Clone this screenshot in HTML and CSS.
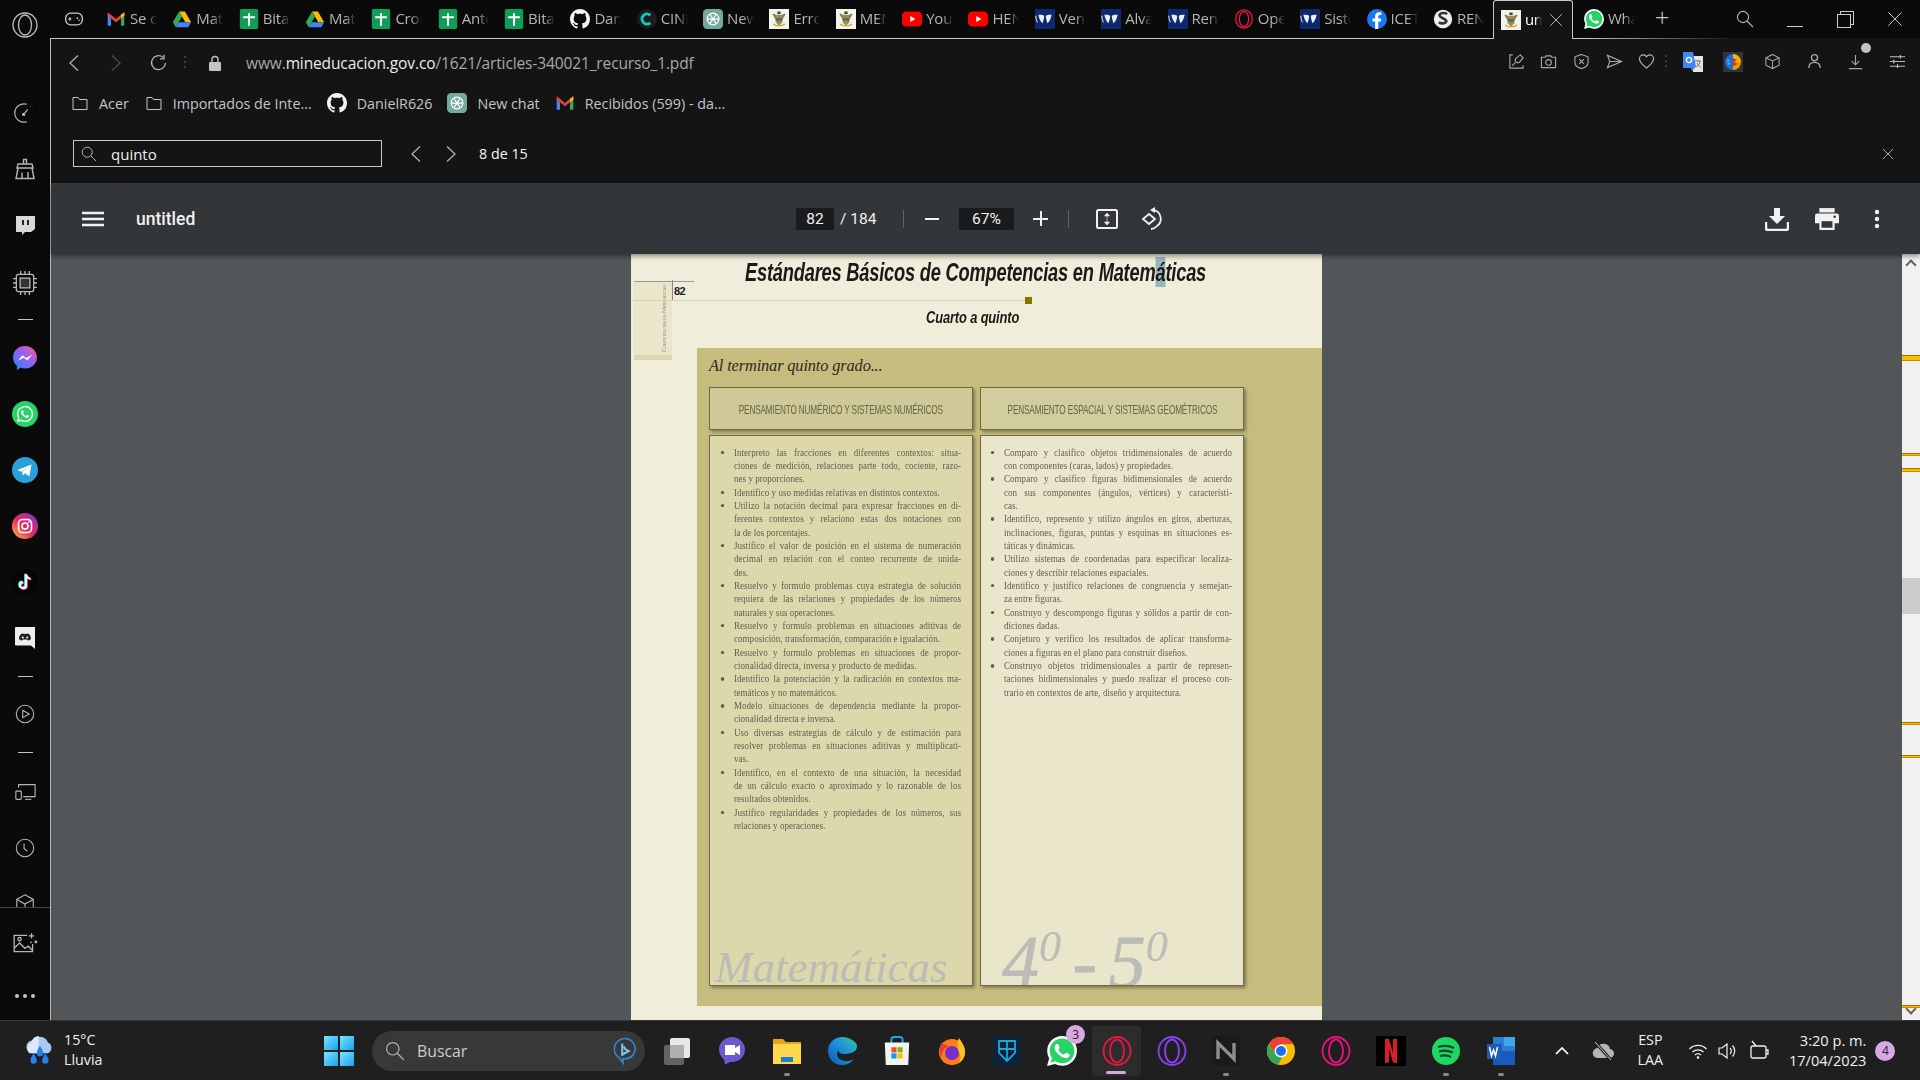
FILE: index.html
```html
<!DOCTYPE html>
<html lang="es">
<head>
<meta charset="utf-8">
<title>untitled</title>
<link rel="stylesheet" href="styles.css">
</head>
<body>
<svg class="sprite" xmlns="http://www.w3.org/2000/svg">
  <defs>
    <linearGradient id="g-ms" x1="0" y1="1" x2="1" y2="0"><stop offset="0" stop-color="#1c8cf5"/><stop offset=".55" stop-color="#9a5cf0"/><stop offset="1" stop-color="#f0609a"/></linearGradient>
    <linearGradient id="g-ig" x1="0" y1="1" x2="1" y2="0"><stop offset="0" stop-color="#fdc43f"/><stop offset=".45" stop-color="#ee2a5c"/><stop offset="1" stop-color="#7a33d0"/></linearGradient>
    <linearGradient id="g-win" x1="0" y1="0" x2="1" y2="1"><stop offset="0" stop-color="#7fe3fb"/><stop offset="1" stop-color="#12a5ee"/></linearGradient>
    <linearGradient id="g-edge" x1="1" y1="0" x2="0" y2="1"><stop offset="0" stop-color="#35c5a0"/><stop offset=".5" stop-color="#1a8ce0"/><stop offset="1" stop-color="#0c59a8"/></linearGradient>
  </defs>
  <symbol id="i-game" viewBox="0 0 24 24"><rect x="2" y="5" width="20" height="14" rx="6" fill="none" stroke="#ccc" stroke-width="1.6"/><path d="M7 10v4M5 12h4" stroke="#ccc" stroke-width="1.4"/><circle cx="16" cy="11" r="1" fill="#ccc"/><circle cx="18" cy="13.5" r="1" fill="#ccc"/></symbol>
  <symbol id="i-gmail" viewBox="0 0 24 24"><path d="M2 6v14h4V11z" fill="#4285f4"/><path d="M22 6v14h-4V11z" fill="#34a853"/><path d="M2 4l4 3 6 5 6-5 4-3v4l-10 8L2 8z" fill="#ea4335"/><path d="M18 7l4-3v4l-4 3z" fill="#fbbc04"/></symbol>
  <symbol id="i-drive" viewBox="0 0 24 24"><path d="M8.5 3h7l7.5 13h-7z" fill="#fbbc04"/><path d="M8.5 3L1 16l3.5 6 7.5-13z" fill="#34a853"/><path d="M8 16h15l-3.5 6h-15z" fill="#4285f4"/></symbol>
  <symbol id="i-sheet" viewBox="0 0 24 24"><rect x="1" y="0" width="22" height="24" rx="2" fill="#0f9d58"/><path d="M12 5v15M5 10h14" stroke="#fff" stroke-width="2.4"/></symbol>
  <symbol id="i-gh" viewBox="0 0 16 16"><path fill="#f4f4f4" d="M8 0C3.58 0 0 3.58 0 8c0 3.54 2.29 6.53 5.47 7.59.4.07.55-.17.55-.38 0-.19-.01-.82-.01-1.49-2.01.37-2.53-.49-2.69-.94-.09-.23-.48-.94-.82-1.13-.28-.15-.68-.52-.01-.53.63-.01 1.08.58 1.23.82.72 1.21 1.87.87 2.33.66.07-.52.28-.87.51-1.07-1.78-.2-3.64-.89-3.64-3.95 0-.87.31-1.59.82-2.15-.08-.2-.36-1.02.08-2.12 0 0 .67-.21 2.2.82.64-.18 1.32-.27 2-.27.68 0 1.36.09 2 .27 1.53-1.04 2.2-.82 2.2-.82.44 1.1.16 1.92.08 2.12.51.56.82 1.27.82 2.15 0 3.07-1.87 3.75-3.65 3.95.29.25.54.73.54 1.48 0 1.07-.01 1.93-.01 2.2 0 .21.15.46.55.38A8.013 8.013 0 0016 8c0-4.42-3.58-8-8-8z"/></symbol>
  <symbol id="i-cin" viewBox="0 0 24 24"><circle cx="12" cy="12" r="12" fill="#1c1c1c"/><path d="M16 7.5a6 6 0 100 9" fill="none" stroke="#14c8b8" stroke-width="3.6"/></symbol>
  <symbol id="i-gpt" viewBox="0 0 24 24"><rect width="24" height="24" rx="5" fill="#74aa9c"/><g fill="none" stroke="#fff" stroke-width="1.5"><circle cx="12" cy="12" r="7"/><path d="M8 6l8 12M16 6L8 18M5 12h14"/></g></symbol>
  <symbol id="i-crest" viewBox="0 0 24 24"><rect width="24" height="24" fill="#f4f4ef"/><path d="M4 6c3-1 4 1 5 3l-1 4zM20 6c-3-1-4 1-5 3l1 4z" fill="#8a7a50"/><path d="M8 7h8v9l-4 4-4-4z" fill="#a58b3a"/><path d="M8 11h8v3H8z" fill="#3a6b9c"/><path d="M10 3h4v3h-4z" fill="#444"/><path d="M5 18c3 3 11 3 14 0" stroke="#c9a63a" fill="none" stroke-width="1.6"/></symbol>
  <symbol id="i-yt" viewBox="0 0 24 24"><rect y="3" width="24" height="18" rx="5" fill="#f00"/><path d="M10 8.5l6 3.5-6 3.5z" fill="#fff"/></symbol>
  <symbol id="i-wp" viewBox="0 0 24 24"><rect width="24" height="24" fill="#10296e"/><path d="M4 7c1 4 2 8 5 10 1-3 2-6 2-9-3-1-5-1-7-1zM20 7c-1 4-2 8-5 10-1-3-2-6-2-9 3-1 5-1 7-1z" fill="#e8f0ff"/><path d="M1 8c0 4 1 6 2 8" stroke="#e8f0ff" fill="none" stroke-width="1.2"/></symbol>
  <symbol id="i-opr" viewBox="0 0 24 24"><g fill="none" stroke="#e0193e" stroke-width="1.6"><ellipse cx="12" cy="12" rx="10" ry="11"/><ellipse cx="12" cy="12" rx="5.6" ry="9"/></g></symbol>
  <symbol id="i-fb" viewBox="0 0 24 24"><circle cx="12" cy="12" r="12" fill="#1877f2"/><path d="M13.5 24v-9h3l.6-3.6h-3.6V9.2c0-1.1.5-1.9 2-1.9h1.7V4.1c-.8-.1-1.8-.2-2.7-.2-2.9 0-4.7 1.7-4.7 4.8v2.7H6.700V15h3.100v9z" fill="#fff"/></symbol>
  <symbol id="i-ren" viewBox="0 0 24 24"><circle cx="12" cy="12" r="11" fill="#eee"/><path d="M17 6c-3-2-8-1.500-9 1-1 4 8 4 8 8-1 2.500-6 3-9 1" fill="none" stroke="#333" stroke-width="3.200"/></symbol>
  <symbol id="i-wa" viewBox="0 0 24 24"><path d="M12 1a11 11 0 00-9.500 16.500L1 23l5.700-1.500A11 11 0 1012 1z" fill="#25d366"/><path fill="#fff" d="M17.472 14.382c-.297-.149-1.758-.867-2.03-.967-.273-.099-.471-.148-.67.15-.197.297-.767.966-.94 1.164-.173.199-.347.223-.644.075-.297-.15-1.255-.463-2.39-1.475-.883-.788-1.48-1.761-1.653-2.059-.173-.297-.018-.458.13-.606.134-.133.298-.347.446-.52.149-.174.198-.298.298-.497.099-.198.05-.371-.025-.52-.075-.149-.669-1.612-.916-2.207-.242-.579-.487-.5-.669-.51-.173-.008-.371-.01-.57-.01-.198 0-.52.074-.792.372-.272.297-1.04 1.016-1.04 2.479 0 1.462 1.065 2.875 1.213 3.074.149.198 2.096 3.2 5.077 4.487.709.306 1.262.489 1.694.625.712.227 1.36.195 1.871.118.571-.085 1.758-.719 2.006-1.413.248-.694.248-1.289.173-1.413-.074-.124-.272-.198-.57-.347m-5.421 7.403h-.004a9.87 9.87 0 01-5.031-1.378l-.361-.214-3.741.982.998-3.648-.235-.374a9.86 9.86 0 01-1.51-5.26c.001-5.45 4.436-9.884 9.888-9.884 2.64 0 5.122 1.03 6.988 2.898a9.825 9.825 0 012.893 6.994c-.003 5.45-4.437 9.884-9.885 9.884m8.413-18.297A11.815 11.815 0 0012.05 0C5.495 0 .16 5.335.157 11.892c0 2.096.547 4.142 1.588 5.945L.057 24l6.305-1.654a11.882 11.882 0 005.683 1.448h.005c6.554 0 11.89-5.335 11.893-11.893a11.821 11.821 0 00-3.48-8.413z"/></symbol>
  <symbol id="i-wa-side" viewBox="0 0 24 24"><circle cx="12" cy="12" r="12" fill="#25d366"/><g transform="translate(4.500 4.500) scale(.625)"><path fill="#fff" d="M17.472 14.382c-.297-.149-1.758-.867-2.03-.967-.273-.099-.471-.148-.67.15-.197.297-.767.966-.94 1.164-.173.199-.347.223-.644.075-.297-.15-1.255-.463-2.39-1.475-.883-.788-1.48-1.761-1.653-2.059-.173-.297-.018-.458.13-.606.134-.133.298-.347.446-.52.149-.174.198-.298.298-.497.099-.198.05-.371-.025-.52-.075-.149-.669-1.612-.916-2.207-.242-.579-.487-.5-.669-.51-.173-.008-.371-.01-.57-.01-.198 0-.52.074-.792.372-.272.297-1.04 1.016-1.04 2.479 0 1.462 1.065 2.875 1.213 3.074.149.198 2.096 3.2 5.077 4.487.709.306 1.262.489 1.694.625.712.227 1.36.195 1.871.118.571-.085 1.758-.719 2.006-1.413.248-.694.248-1.289.173-1.413-.074-.124-.272-.198-.57-.347m-5.421 7.403h-.004a9.87 9.87 0 01-5.031-1.378l-.361-.214-3.741.982.998-3.648-.235-.374a9.86 9.86 0 01-1.51-5.26c.001-5.45 4.436-9.884 9.888-9.884 2.64 0 5.122 1.03 6.988 2.898a9.825 9.825 0 012.893 6.994c-.003 5.45-4.437 9.884-9.885 9.884m8.413-18.297A11.815 11.815 0 0012.05 0C5.495 0 .16 5.335.157 11.892c0 2.096.547 4.142 1.588 5.945L.057 24l6.305-1.654a11.882 11.882 0 005.683 1.448h.005c6.554 0 11.89-5.335 11.893-11.893a11.821 11.821 0 00-3.48-8.413z"/></g></symbol>

  <symbol id="s-opera" viewBox="0 0 26 26"><g fill="none" stroke="#bdbdbd" stroke-width="1.3"><circle cx="13" cy="13" r="12"/><ellipse cx="13" cy="13" rx="6.500" ry="10"/></g></symbol>
  <symbol id="s-speed" viewBox="0 0 24 24"><g fill="none" stroke="#b5b5b5" stroke-width="1.300"><path d="M14 21.500A10 10 0 1 1 14 2.500"/><path d="M18 5l.1.1M20.500 8.500l.1.1M21.800 12l.1.100M21 16l.1.100M18.500 19l.1.100" stroke-width="1.600"/><path d="M11 13l4-5"/></g><circle cx="10.500" cy="13.500" r="1.800" fill="#b5b5b5"/></symbol>
  <symbol id="s-broom" viewBox="0 0 24 24"><g fill="none" stroke="#b5b5b5" stroke-width="1.400"><path d="M10.500 7V2.500h3V7M5 7h14l1 4H4z"/><path d="M5 11l-2 10.500h18L19 11M9 15.500v6M15 15v6"/></g></symbol>
  <symbol id="s-twitch" viewBox="0 0 24 24"><path d="M3 3h19v13l-4 3h-6l-3 3v-3H3z" fill="#d8d8d8"/><path d="M10 7v5M15 7v5" stroke="#222" stroke-width="2"/></symbol>
  <symbol id="s-cpu" viewBox="0 0 24 24"><g fill="none" stroke="#b8b8b8" stroke-width="1.200"><rect x="4" y="4" width="16" height="16" rx="2"/><rect x="7.500" y="7.500" width="9" height="9" fill="#333"/><path d="M1 8h3M1 12h3M1 16h3M20 8h3M20 12h3M20 16h3M8 1v3M12 1v3M16 1v3M8 20v3M12 20v3M16 20v3"/></g></symbol>
  <symbol id="s-msgr" viewBox="0 0 24 24"><path d="M12 1C5.500 1 1 5.500 1 11.500c0 3.200 1.300 5.800 3.500 7.700V23l3.500-1.900c1.300.4 2.600.6 4 .6 6.500 0 11-4.700 11-10.200S18.500 1 12 1z" fill="url(#g-ms)"/><path d="M5.500 14.500l4-5 3.500 2.600 5.500-3-4.200 5.200-3.500-2.600z" fill="#fff"/></symbol>
  <symbol id="s-tg" viewBox="0 0 24 24"><circle cx="12" cy="12" r="12" fill="#2a9fd8"/><path d="M5 12l13-5-2 11-4-3-2 2-.6-3.500L16 9l-7.500 4.500z" fill="#fff"/></symbol>
  <symbol id="s-ig" viewBox="0 0 24 24"><circle cx="12" cy="12" r="12" fill="url(#g-ig)"/><rect x="6" y="6" width="12" height="12" rx="3.500" fill="none" stroke="#fff" stroke-width="1.500"/><circle cx="12" cy="12" r="2.800" fill="none" stroke="#fff" stroke-width="1.500"/><circle cx="15.600" cy="8.400" r=".9" fill="#fff"/></symbol>
  <symbol id="s-tt" viewBox="0 0 24 24"><circle cx="12" cy="12" r="12" fill="#050505"/><path d="M13 5v10a2.800 2.800 0 1 1-2.800-2.800M13 5c.5 2.500 2 3.800 4 4" fill="none" stroke="#25f4ee" stroke-width="2" transform="translate(-.8 -.6)"/><path d="M13 5v10a2.800 2.800 0 1 1-2.800-2.800M13 5c.5 2.500 2 3.800 4 4" fill="none" stroke="#fe2c55" stroke-width="2" transform="translate(.8 .6)"/><path d="M13 5v10a2.800 2.800 0 1 1-2.800-2.800M13 5c.5 2.500 2 3.800 4 4" fill="none" stroke="#fff" stroke-width="1.700"/></symbol>
  <symbol id="s-dc" viewBox="0 0 24 24"><path d="M3 1h19v22l-4-3.500H3a1 1 0 01-1-1V2a1 1 0 011-1z" fill="#eee"/><path d="M6 13c0-3 1.500-5 3-5.500l3 .5 3-.5c1.500.5 3 2.500 3 5.500-1 1-2 1.500-3 1.500l-1-1h-4l-1 1c-1 0-2-.5-3-1.500z" fill="#222"/><circle cx="9.800" cy="11.500" r="1.100" fill="#eee"/><circle cx="14.200" cy="11.500" r="1.100" fill="#eee"/></symbol>
  <symbol id="s-play" viewBox="0 0 24 24"><circle cx="12" cy="12" r="9.500" fill="none" stroke="#b5b5b5" stroke-width="1.200"/><path d="M9.500 8l7 4-7 4z" fill="none" stroke="#b5b5b5" stroke-width="1.200"/></symbol>
  <symbol id="s-screen" viewBox="0 0 24 24"><g fill="none" stroke="#b5b5b5" stroke-width="1.200"><path d="M5 7V4h18v13H10"/><rect x="2" y="11" width="6" height="9" rx="1"/><path d="M12 20h7"/></g></symbol>
  <symbol id="s-clock" viewBox="0 0 24 24"><circle cx="12" cy="12" r="9.500" fill="none" stroke="#b5b5b5" stroke-width="1.200"/><path d="M11 7v5.500l3.500 3" fill="none" stroke="#b5b5b5" stroke-width="1.200"/></symbol>
  <symbol id="s-cube" viewBox="0 0 24 24"><g fill="none" stroke="#b5b5b5" stroke-width="1.200"><path d="M12 2l9 5v10l-9 5-9-5V7z"/><path d="M3 7l9 5 9-5M12 12v10"/></g></symbol>
  <symbol id="s-photos" viewBox="0 0 24 24"><g fill="none" stroke="#b5b5b5" stroke-width="1.200"><path d="M14 4H2v15h17v-7"/><path d="M2 16l5-5 5 5 3-2 4 4"/><circle cx="7" cy="7.500" r="1.500"/><path d="M18 2v5M15.500 4.500h5M21 9l2 2M23 9l-2 2M17 10l1 1"/></g></symbol>

  <symbol id="a-pin" viewBox="0 0 18 18"><g fill="none" stroke="#a8a8a8" stroke-width="1.200"><path d="M5 2H2v14h14v-3M8 6l5-4 3 3-4 5-2 .5-2.500-2.500zM8 10l-3.500 3.500"/></g></symbol>
  <symbol id="a-cam" viewBox="0 0 18 18"><g fill="none" stroke="#a8a8a8" stroke-width="1.200"><path d="M1.500 4.500h4L6.500 3h5l1 1.500h4v11h-15z"/><circle cx="9" cy="10" r="3"/></g></symbol>
  <symbol id="a-shield" viewBox="0 0 18 18"><g fill="none" stroke="#a8a8a8" stroke-width="1.200"><path d="M9 1.500L16 4v6c0 3-3.500 5.500-7 6.500C5.500 15.500 2 13 2 10V4z"/><path d="M6.500 6.500l5 5M11.500 6.500l-5 5"/></g></symbol>
  <symbol id="a-send" viewBox="0 0 18 18"><path d="M1.500 2.500L16.500 9 1.500 15.500 4 9z M4 9h12.500" fill="none" stroke="#a8a8a8" stroke-width="1.200"/></symbol>
  <symbol id="a-heart" viewBox="0 0 18 18"><path d="M9 16C4 12 1.500 9.500 1.500 6.200 1.500 3.800 3.300 2 5.500 2 7 2 8.300 2.800 9 4c.7-1.200 2-2 3.500-2 2.200 0 4 1.800 4 4.200C16.500 9.500 14 12 9 16z" fill="none" stroke="#b5b5b5" stroke-width="1.200"/></symbol>
  <symbol id="a-gt" viewBox="0 0 20 20"><rect x="10" y="4" width="10" height="16" fill="#e6e6e6"/><path d="M0 0h10l3 14.500L9 19l-1-3H0z" fill="#4285f4"/><path d="M12 9h6M15 8v1M13 15c2-1 3.500-3 4-6M14 11c.8 2 2 3.500 4 4.500" stroke="#777" stroke-width="1" fill="none"/><circle cx="6" cy="8" r="2.600" fill="none" stroke="#fff" stroke-width="1.300"/></symbol>
  <symbol id="a-wheel" viewBox="0 0 20 20"><rect width="20" height="20" fill="#333"/><path d="M10 2a8 8 0 000 16z" fill="#1e6fd8"/><path d="M10 2a8 8 0 018 8h-8z" fill="#f4b400"/><path d="M10 10h8a8 8 0 01-8 8z" fill="#e8a000"/><path d="M10 6l4 2-3 2 4 2-5 2z" fill="#d9301c"/><path d="M4 7l3 1-2 2 3 2-3 1z" fill="#53a6f4"/></symbol>
  <symbol id="a-cube" viewBox="0 0 18 18"><g fill="none" stroke="#a8a8a8" stroke-width="1.100"><path d="M9 1.500l7 3.500v8l-7 3.500L2 13V5z"/><path d="M2 5l7 3.500L16 5M9 8.500v8"/></g></symbol>
  <symbol id="a-user" viewBox="0 0 18 18"><g fill="none" stroke="#a8a8a8" stroke-width="1.400"><circle cx="9" cy="5" r="3.200"/><path d="M3 16c0-4 2.500-6 6-6s6 2 6 6"/></g></symbol>
  <symbol id="a-dl" viewBox="0 0 18 18"><g fill="none" stroke="#a8a8a8" stroke-width="1.200"><path d="M9 2v10M5 8.500L9 12.500l4-4M2 16.500h14"/></g></symbol>
  <symbol id="a-sliders" viewBox="0 0 18 18"><g fill="none" stroke="#bdbdbd" stroke-width="1.200"><path d="M1 4h16M1 9h16M1 14h16M12 2v4M5 7v4M9 12v4"/></g></symbol>
  <symbol id="n-back" viewBox="0 0 12 18"><path d="M10 1.500L2 9l8 7.500" fill="none" stroke="#b0b0b0" stroke-width="1.300"/></symbol>
  <symbol id="n-fwd" viewBox="0 0 12 18"><path d="M2 1.500L10 9l-8 7.500" fill="none" stroke="#b0b0b0" stroke-width="1.300"/></symbol>
  <symbol id="n-reload" viewBox="0 0 18 18"><path d="M15.500 9A7 7 0 1 1 13 3.300M14 .8v4h-4" fill="none" stroke="#b5b5b5" stroke-width="1.300"/></symbol>
  <symbol id="n-lock" viewBox="0 0 12 16"><path d="M3 7V4.500a3 3 0 016 0V7" fill="none" stroke="#c4c4c4" stroke-width="1.400"/><rect y="7" width="12" height="9" rx="1" fill="#c4c4c4"/></symbol>
  <symbol id="n-folder" viewBox="0 0 16 16"><path d="M1 2.500h5l1.500 2H15v10H1z" fill="none" stroke="#c4c4c4" stroke-width="1"/></symbol>
  <symbol id="n-search" viewBox="0 0 18 18"><circle cx="7" cy="7" r="5.600" fill="none" stroke="#b5b5b5" stroke-width="1.100"/><path d="M11 11l6 6" stroke="#b5b5b5" stroke-width="1.100"/></symbol>
  <symbol id="n-x" viewBox="0 0 18 18"><path d="M1.500 1.500l15 15M16.500 1.500l-15 15" stroke="#d0d0d0" stroke-width="1.100"/></symbol>

  <symbol id="p-menu" viewBox="0 0 22 16"><path d="M0 2h22M0 8h22M0 14h22" stroke="#f1f1f1" stroke-width="2.400"/></symbol>
  <symbol id="p-fit" viewBox="0 0 22 20"><rect x="1" y="1" width="20" height="18" rx="1.500" fill="none" stroke="#f1f1f1" stroke-width="2"/><path d="M11 4l-2.500 3h5zM11 16l-2.500-3h5zM11 7v6" fill="#f1f1f1" stroke="#f1f1f1" stroke-width=".6"/></symbol>
  <symbol id="p-rot" viewBox="0 0 22 24"><path d="M13 3a9 9 0 013 16 9 9 0 01-6 3" fill="none" stroke="#f1f1f1" stroke-width="1.800"/><path d="M9 3l5-3v6z" fill="#f1f1f1"/><path d="M8 7l6 5-6 5-6-5z" fill="none" stroke="#f1f1f1" stroke-width="1.800"/></symbol>
  <symbol id="p-dl" viewBox="0 0 24 24"><path d="M9 1h6v8h5l-8 8-8-8h5z" fill="#f1f1f1"/><path d="M1 15v6a2 2 0 002 2h18a2 2 0 002-2v-6" fill="none" stroke="#f1f1f1" stroke-width="2.500"/></symbol>
  <symbol id="p-print" viewBox="0 0 22 20"><path d="M4 0h14v4H4z" fill="#f1f1f1"/><path d="M2 5h18a2 2 0 012 2v7h-4v6H4v-6H0V7a2 2 0 012-2z" fill="#f1f1f1"/><rect x="6" y="12" width="10" height="6" fill="#323639"/><circle cx="18" cy="8" r="1.100" fill="#323639"/></symbol>
  <symbol id="p-dots" viewBox="0 0 6 20"><circle cx="3" cy="3" r="2.200" fill="#f1f1f1"/><circle cx="3" cy="10" r="2.200" fill="#f1f1f1"/><circle cx="3" cy="17" r="2.200" fill="#f1f1f1"/></symbol>

  <symbol id="t-weather" viewBox="0 0 30 30"><path d="M8 17a6 6 0 01.500-12 8 8 0 0114 2 5.500 5.500 0 010 10z" fill="#a9c9f5"/><path d="M14 1a7 7 0 00-7 6 6 6 0 00-2 10h8z" fill="#dbe8ff"/><path d="M9 17c-2 3-3 5-3 7a3 3 0 006 0c0-2-1-4-3-7zM20 17c-2 3-3 5-3 7a3 3 0 006 0c0-2-1-4-3-7zM15 10c-2 3-3 5-3 7a3 3 0 006 0c0-2-1-4-3-7z" fill="#2481ea"/></symbol>
  <symbol id="t-win" viewBox="0 0 30 30"><g fill="url(#g-win)"><rect width="14" height="14"/><rect x="16" width="14" height="14"/><rect y="16" width="14" height="14"/><rect x="16" y="16" width="14" height="14"/></g></symbol>
  <symbol id="t-bing" viewBox="0 0 26 30"><path d="M13 1.500a11.500 11.500 0 00-6 21.300L11 28l-.5-4.500h2.500a11 11 0 000-22z" fill="none" stroke="#2e8bd8" stroke-width="1.600"/><path d="M10 7v12l7-4-4-2-1-3" fill="none" stroke="#7cc6f5" stroke-width="2.200"/></symbol>
  <symbol id="t-view" viewBox="0 0 30 30"><rect x="8" y="2" width="20" height="20" rx="2" fill="#e8e8e8"/><rect x="2" y="9" width="20" height="20" rx="2" fill="#6a6a6a" opacity=".9"/><rect x="8" y="9" width="14" height="13" fill="#b0b0b0"/></symbol>
  <symbol id="t-meet" viewBox="0 0 30 30"><path d="M15 1C8 1 2 6.500 2 13.500c0 4 2 7.500 5 10l1 5 5-2.500h2c7 0 13-5.500 13-12.500S22 1 15 1z" fill="#6a5acd"/><path d="M8 9h10v10H8zM18 12l5-3v10l-5-3z" fill="#fff"/></symbol>
  <symbol id="t-files" viewBox="0 0 30 30"><path d="M1 3h10l3 3h15v22H1z" fill="#e8a317"/><path d="M1 8h28v20H1z" fill="#ffd84d"/><rect x="9" y="21" width="12" height="5" fill="#1d7fd1"/></symbol>
  <symbol id="t-edge" viewBox="0 0 30 30"><path d="M15 1A14 14 0 001 15c0 8 6 14 14 14 5 0 9-2 12-6-3 2-6 2-8 2-5 0-9-3-9-7 0-2 1-3 2-4-1 1 0 4 5 4 7 0 13-2 13-8C30 7 24 1 15 1z" fill="url(#g-edge)"/></symbol>
  <symbol id="t-store" viewBox="0 0 30 32"><path d="M9 8V4a3 3 0 013-3h6a3 3 0 013 3v4" fill="none" stroke="#1aa8e8" stroke-width="2"/><path d="M2 7h26l-1 24H3z" fill="#f2f2f2"/><rect x="9" y="12" width="5.500" height="5.500" fill="#f25022"/><rect x="15.500" y="12" width="5.500" height="5.500" fill="#7fba00"/><rect x="9" y="18.500" width="5.500" height="5.500" fill="#00a4ef"/><rect x="15.500" y="18.500" width="5.500" height="5.500" fill="#ffb900"/></symbol>
  <symbol id="t-fox" viewBox="0 0 30 30"><circle cx="15" cy="16" r="13" fill="#ff7a18"/><path d="M22 2c2 3 6 8 6 14a13 13 0 01-6 11c2-4 2-9-1-12-1-4-1-9 1-13z" fill="#ffc21a"/><circle cx="15" cy="17" r="7" fill="#7a2ec8"/><path d="M5 6c-3 5-3 11 0 16-1-6 2-10 7-12-3-1-6-1-7-4z" fill="#e63c3c"/></symbol>
  <symbol id="t-shield" viewBox="0 0 30 30"><rect x="1" width="28" height="30" fill="#10213a"/><path d="M7 5h16v12l-8 8-8-8zM15 5v20M7 13h16" fill="none" stroke="#19a8d8" stroke-width="1.800"/></symbol>
  <symbol id="t-opera" viewBox="0 0 30 30"><g fill="none" stroke-width="1.900"><ellipse cx="15" cy="15" rx="13.500" ry="14"/><ellipse cx="15" cy="15" rx="7" ry="11.500"/></g></symbol>
  <symbol id="t-n" viewBox="0 0 30 30"><rect x="1" width="28" height="30" rx="3" fill="#1a1a1a"/><path d="M7 23V7l16 16V7" fill="none" stroke="#8e8e8e" stroke-width="3.400"/></symbol>
  <symbol id="t-chrome" viewBox="0 0 30 30"><circle cx="15" cy="15" r="14" fill="#fbbc04"/><path d="M15 1a14 14 0 00-12.100 7L9 18.500 15 8h12.100A14 14 0 0015 1z" fill="#ea4335"/><path d="M2.900 8A14 14 0 0012 28.700L18 18.500l-9 0z" fill="#34a853"/><circle cx="15" cy="15" r="6.500" fill="#fff"/><circle cx="15" cy="15" r="5" fill="#1a73e8"/></symbol>
  <symbol id="t-flix" viewBox="0 0 30 30"><rect width="30" height="30" fill="#000"/><path d="M9 3h4l4 14V3h4v24l-4-.5-4-14V26.500L9 27z" fill="#d81f26"/></symbol>
  <symbol id="t-spot" viewBox="0 0 30 30"><circle cx="15" cy="15" r="14" fill="#1ed760"/><path d="M7 11c6-2 11-1.500 16 1M8 15.500c5-1.500 9-1 14 1M9 20c4-1 8-.6 11 1" fill="none" stroke="#143" stroke-width="2.200"/></symbol>
  <symbol id="t-word" viewBox="0 0 30 30"><rect x="7" y="1" width="22" height="28" fill="#2b7cd3"/><rect x="7" y="15" width="22" height="14" fill="#185abd"/><rect x="18" y="1" width="11" height="9" fill="#41a5ee"/><rect x="1" y="8" width="15" height="15" fill="#1e5cb3"/><path d="M3.500 11l2 9 2-6 2 6 2-9" fill="none" stroke="#fff" stroke-width="1.500"/></symbol>
  <symbol id="t-caret" viewBox="0 0 16 10"><path d="M2 8l6-6 6 6" fill="none" stroke="#fff" stroke-width="1.700"/></symbol>
  <symbol id="t-cloud" viewBox="0 0 22 22"><path d="M6 18a5 5 0 01-.500-10 6.500 6.500 0 0112.500 1 4.500 4.500 0 01-1 9z" fill="#b5b5b5"/><path d="M3 2l16 18" stroke="#1f1f1f" stroke-width="3"/><path d="M3 2l16 18" stroke="#ccc" stroke-width="1"/></symbol>
  <symbol id="t-wifi" viewBox="0 0 20 20"><g fill="none" stroke="#f0f0f0" stroke-width="1.300"><path d="M1.500 8a12 12 0 0117 0M4.500 11a8 8 0 0111 0M7 14a4.500 4.500 0 016 0"/></g><circle cx="10" cy="16.500" r="1.300" fill="#f0f0f0"/></symbol>
  <symbol id="t-vol" viewBox="0 0 20 20"><g fill="none" stroke="#f0f0f0" stroke-width="1.200"><path d="M2 7v6h3l5 4V3L5 7z"/><path d="M13 7a4 4 0 010 6M15.500 4.500a8 8 0 010 11" /></g></symbol>
  <symbol id="t-bat" viewBox="0 0 22 22"><g fill="none" stroke="#f0f0f0" stroke-width="1.300"><rect x="3" y="6" width="15" height="12" rx="2"/><path d="M18 10h2v4h-2M4 1l4 5"/></g></symbol>
</svg>

<div class="app">
  <aside class="sidebar">
    <div class="side-top">
      <div class="side-logo"><svg class="ic26"><use href="#s-opera"/></svg></div>
      <div class="side-item first"><svg class="ic22"><use href="#s-speed"/></svg></div>
      <div class="side-item"><svg class="ic24"><use href="#s-broom"/></svg></div>
      <div class="side-item"><svg class="ic24"><use href="#s-twitch"/></svg></div>
      <div class="side-item nudge"><svg class="ic26"><use href="#s-cpu"/></svg></div>
      <div class="side-sep s1"></div>
      <div class="side-item"><svg class="ic26"><use href="#s-msgr"/></svg></div>
      <div class="side-item"><svg class="ic26"><use href="#i-wa-side"/></svg></div>
      <div class="side-item"><svg class="ic26"><use href="#s-tg"/></svg></div>
      <div class="side-item"><svg class="ic26"><use href="#s-ig"/></svg></div>
      <div class="side-item"><svg class="ic26"><use href="#s-tt"/></svg></div>
      <div class="side-item"><svg class="ic24"><use href="#s-dc"/></svg></div>
      <div class="side-sep"></div>
      <div class="side-item"><svg class="ic22"><use href="#s-play"/></svg></div>
      <div class="side-sep s3"></div>
      <div class="side-item"><svg class="ic22"><use href="#s-screen"/></svg></div>
      <div class="side-item"><svg class="ic22"><use href="#s-clock"/></svg></div>
      <div class="side-item"><svg class="ic22"><use href="#s-cube"/></svg></div>
    </div>
    <div class="side-bottom">
      <div class="side-slot"><svg class="ic26"><use href="#s-photos"/></svg></div>
      <div class="side-more"><i></i><i></i><i></i></div>
    </div>
  </aside>

  <div class="content">
    <div class="tabstrip">
      <div class="tab-game"><svg class="ic20"><use href="#i-game"/></svg></div>
      <div class="tab"><svg class="ic20"><use href="#i-gmail"/></svg><span class="tab-t">Se con</span></div>
      <div class="tab"><svg class="ic20"><use href="#i-drive"/></svg><span class="tab-t">Mate</span></div>
      <div class="tab"><svg class="ic20"><use href="#i-sheet"/></svg><span class="tab-t">Bitac</span></div>
      <div class="tab"><svg class="ic20"><use href="#i-drive"/></svg><span class="tab-t">Mate</span></div>
      <div class="tab"><svg class="ic20"><use href="#i-sheet"/></svg><span class="tab-t">Cron</span></div>
      <div class="tab"><svg class="ic20"><use href="#i-sheet"/></svg><span class="tab-t">Ante</span></div>
      <div class="tab"><svg class="ic20"><use href="#i-sheet"/></svg><span class="tab-t">Bitac</span></div>
      <div class="tab"><svg class="ic20"><use href="#i-gh"/></svg><span class="tab-t">Dani</span></div>
      <div class="tab"><svg class="ic20"><use href="#i-cin"/></svg><span class="tab-t">CINE</span></div>
      <div class="tab"><svg class="ic20"><use href="#i-gpt"/></svg><span class="tab-t">New</span></div>
      <div class="tab"><svg class="ic20"><use href="#i-crest"/></svg><span class="tab-t">Error</span></div>
      <div class="tab"><svg class="ic20"><use href="#i-crest"/></svg><span class="tab-t">MEN</span></div>
      <div class="tab"><svg class="ic20"><use href="#i-yt"/></svg><span class="tab-t">YouT</span></div>
      <div class="tab"><svg class="ic20"><use href="#i-yt"/></svg><span class="tab-t">HEN</span></div>
      <div class="tab"><svg class="ic20"><use href="#i-wp"/></svg><span class="tab-t">Vent</span></div>
      <div class="tab"><svg class="ic20"><use href="#i-wp"/></svg><span class="tab-t">Alva</span></div>
      <div class="tab"><svg class="ic20"><use href="#i-wp"/></svg><span class="tab-t">Ren</span></div>
      <div class="tab"><svg class="ic20"><use href="#i-opr"/></svg><span class="tab-t">Ope</span></div>
      <div class="tab"><svg class="ic20"><use href="#i-wp"/></svg><span class="tab-t">Siste</span></div>
      <div class="tab"><svg class="ic20"><use href="#i-fb"/></svg><span class="tab-t">ICET</span></div>
      <div class="tab"><svg class="ic20"><use href="#i-ren"/></svg><span class="tab-t">REN</span></div>
      <div class="tab active"><svg class="ic20"><use href="#i-crest"/></svg><span class="tab-t">un</span><svg class="ic14 tab-x"><use href="#n-x"/></svg></div>
      <div class="tab after"><svg class="ic20"><use href="#i-wa"/></svg><span class="tab-t">Wha</span></div>
      <div class="tab-plus">+</div>
      <div class="winctl">
        <div class="win"><svg class="ic18"><use href="#n-search"/></svg></div>
        <div class="win"><span class="min"></span></div>
        <div class="win"><span class="rest"></span></div>
        <div class="win"><svg class="ic16"><use href="#n-x"/></svg></div>
      </div>
    </div>

    <div class="window">
      <div class="chrome">
        <div class="addr">
          <svg class="nav back"><use href="#n-back"/></svg>
          <svg class="nav fwd"><use href="#n-fwd"/></svg>
          <svg class="ic18 reload"><use href="#n-reload"/></svg>
          <span class="vdots"></span>
          <svg class="lock"><use href="#n-lock"/></svg>
          <div class="url">www.<b>mineducacion.gov.co</b>/1621/articles-340021_recurso_1.pdf</div>
          <div class="addr-tools">
            <div class="s32"><svg class="ic17"><use href="#a-pin"/></svg></div>
            <div class="s32"><svg class="ic17"><use href="#a-cam"/></svg></div>
            <div class="s34"><svg class="ic17"><use href="#a-shield"/></svg></div>
            <div class="s32"><svg class="ic17"><use href="#a-send"/></svg></div>
            <div class="s32"><svg class="ic17"><use href="#a-heart"/></svg></div>
            <div class="s8"><span class="vdots"></span></div>
            <div class="s46"><svg class="ic20"><use href="#a-gt"/></svg></div>
            <div class="s34"><svg class="ic20"><use href="#a-wheel"/></svg></div>
            <div class="s44"><svg class="ic17"><use href="#a-cube"/></svg></div>
            <div class="s40"><svg class="ic17"><use href="#a-user"/></svg></div>
            <div class="s42 has-dot"><svg class="ic17"><use href="#a-dl"/></svg><span class="dot"></span></div>
            <div class="s42"><svg class="ic17"><use href="#a-sliders"/></svg></div>
          </div>
        </div>

        <div class="marks">
          <div class="mark-i m-acer"><svg class="ic16"><use href="#n-folder"/></svg><span>Acer</span></div>
          <div class="mark-i m-imp"><svg class="ic16"><use href="#n-folder"/></svg><span>Importados de Inte...</span></div>
          <div class="mark-i m-app"><svg class="ic20"><use href="#i-gh"/></svg><span>DanielR626</span></div>
          <div class="mark-i m-app"><svg class="ic20"><use href="#i-gpt"/></svg><span>New chat</span></div>
          <div class="mark-i m-app"><svg class="ic20"><use href="#i-gmail"/></svg><span>Recibidos (599) - da...</span></div>
        </div>

        <div class="find">
          <div class="find-box"><svg class="ic16"><use href="#n-search"/></svg><span>quinto</span></div>
          <svg class="nav find-prev"><use href="#n-back"/></svg>
          <svg class="nav find-next"><use href="#n-fwd"/></svg>
          <span class="find-count">8 de 15</span>
          <svg class="ic12 find-x"><use href="#n-x"/></svg>
        </div>
      </div>

      <div class="pdfbar">
        <div class="pdf-left">
          <svg class="p-menu"><use href="#p-menu"/></svg>
          <span class="pdf-title">untitled</span>
        </div>
        <div class="pdf-center">
          <span class="pdf-input pg">82</span>
          <span class="pdf-total">/ 184</span>
          <span class="pdf-sep first"></span>
          <span class="pdf-minus"></span>
          <span class="pdf-input zm">67%</span>
          <span class="pdf-plus"></span>
          <span class="pdf-sep"></span>
          <svg class="p-fit"><use href="#p-fit"/></svg>
          <svg class="p-rot"><use href="#p-rot"/></svg>
        </div>
        <div class="pdf-right">
          <svg class="ic24"><use href="#p-dl"/></svg>
          <svg class="ic24 pr"><use href="#p-print"/></svg>
          <svg class="p-dots"><use href="#p-dots"/></svg>
        </div>
      </div>

      <div class="viewer">
        <div class="pdf-area">
          <div class="page">
            <div class="margin-tab"><span class="margin-txt">Competencias en Matemáticas</span></div>
            <div class="page-no">82</div>
            <div class="page-head">
              <h1 class="h-title"><span class="cond">Estándares Básicos de Competencias en Matem<span class="hit">á</span>ticas</span></h1>
              <div class="h-rule"><i></i></div>
              <h2 class="h-sub"><span class="cond">Cuarto a quinto</span></h2>
            </div>
            <div class="olive">
              <p class="intro">Al terminar quinto grado...</p>
              <div class="cols">
                <div class="col-h"><span class="cond-c">PENSAMIENTO NUMÉRICO Y SISTEMAS NUMÉRICOS</span></div>
                <div class="col-h alt"><span class="cond-c">PENSAMIENTO ESPACIAL Y SISTEMAS GEOMÉTRICOS</span></div>
                <div class="col-b">
                  <ul class="list">
                    <li><span>Interpreto las fracciones en diferentes contextos: situa-</span><span>ciones de medición, relaciones parte todo, cociente, razo-</span><span class="e">nes y proporciones.</span></li>
                    <li><span class="e">Identifico y uso medidas relativas en distintos contextos.</span></li>
                    <li><span>Utilizo la notación decimal para expresar fracciones en di-</span><span>ferentes contextos y relaciono estas dos notaciones con</span><span class="e">la de los porcentajes.</span></li>
                    <li><span>Justifico el valor de posición en el sistema de numeración</span><span>decimal en relación con el conteo recurrente de unida-</span><span class="e">des.</span></li>
                    <li><span>Resuelvo y formulo problemas cuya estrategia de solución</span><span>requiera de las relaciones y propiedades de los números</span><span class="e">naturales y sus operaciones.</span></li>
                    <li><span>Resuelvo y formulo problemas en situaciones aditivas de</span><span class="e">composición, transformación, comparación e igualación.</span></li>
                    <li><span>Resuelvo y formulo problemas en situaciones de propor-</span><span class="e">cionalidad directa, inversa y producto de medidas.</span></li>
                    <li><span>Identifico la potenciación y la radicación en contextos ma-</span><span class="e">temáticos y no matemáticos.</span></li>
                    <li><span>Modelo situaciones de dependencia mediante la propor-</span><span class="e">cionalidad directa e inversa.</span></li>
                    <li><span>Uso diversas estrategias de cálculo y de estimación para</span><span>resolver problemas en situaciones aditivas y multiplicati-</span><span class="e">vas.</span></li>
                    <li><span>Identifico, en el contexto de una situación, la necesidad</span><span>de un cálculo exacto o aproximado y lo razonable de los</span><span class="e">resultados obtenidos.</span></li>
                    <li><span>Justifico regularidades y propiedades de los números, sus</span><span class="e">relaciones y operaciones.</span></li>
                  </ul>
                  <div class="wm wm-l">Matemáticas</div>
                </div>
                <div class="col-b alt">
                  <ul class="list">
                    <li><span>Comparo y clasifico objetos tridimensionales de acuerdo</span><span class="e">con componentes (caras, lados) y propiedades.</span></li>
                    <li><span>Comparo y clasifico figuras bidimensionales de acuerdo</span><span>con sus componentes (ángulos, vértices) y característi-</span><span class="e">cas.</span></li>
                    <li><span>Identifico, represento y utilizo ángulos en giros, aberturas,</span><span>inclinaciones, figuras, puntas y esquinas en situaciones es-</span><span class="e">táticas y dinámicas.</span></li>
                    <li><span>Utilizo sistemas de coordenadas para especificar localiza-</span><span class="e">ciones y describir relaciones espaciales.</span></li>
                    <li><span>Identifico y justifico relaciones de congruencia y semejan-</span><span class="e">za entre figuras.</span></li>
                    <li><span>Construyo y descompongo figuras y sólidos a partir de con-</span><span class="e">diciones dadas.</span></li>
                    <li><span>Conjeturo y verifico los resultados de aplicar transforma-</span><span class="e">ciones a figuras en el plano para construir diseños.</span></li>
                    <li><span>Construyo objetos tridimensionales a partir de represen-</span><span>taciones bidimensionales y puedo realizar el proceso con-</span><span class="e">trario en contextos de arte, diseño y arquitectura.</span></li>
                  </ul>
                  <div class="wm wm-r">4<sup>0</sup> - 5<sup>0</sup></div>
                </div>
              </div>
            </div>
          </div>
        </div>
        <div class="scroll">
          <div class="sc-arrow up"></div>
          <i class="hit-mark m1"></i><i class="hit-mark m2"></i><i class="hit-mark m3"></i><i class="hit-mark m4"></i><i class="hit-mark m5"></i><i class="hit-mark m6"></i>
          <i class="thumb"></i>
          <div class="sc-arrow down"></div>
        </div>
      </div>
    </div>
  </div>

  <footer class="taskbar">
    <div class="weather">
      <svg class="wx"><use href="#t-weather"/></svg>
      <div class="wx-t"><span>15°C</span><span>Lluvia</span></div>
    </div>
    <div class="tb-win"><svg class="ic30"><use href="#t-win"/></svg></div>
    <div class="tb-search">
      <svg class="ic20"><use href="#n-search"/></svg>
      <span>Buscar</span>
      <svg class="bing"><use href="#t-bing"/></svg>
    </div>
    <div class="tb-apps">
      <div class="app-i"><svg class="ic30"><use href="#t-view"/></svg></div>
      <div class="app-i"><svg class="ic30"><use href="#t-meet"/></svg></div>
      <div class="app-i run"><svg class="ic30"><use href="#t-files"/></svg></div>
      <div class="app-i"><svg class="ic30"><use href="#t-edge"/></svg></div>
      <div class="app-i"><svg class="ic30"><use href="#t-store"/></svg></div>
      <div class="app-i"><svg class="ic30"><use href="#t-fox"/></svg></div>
      <div class="app-i"><svg class="ic30"><use href="#t-shield"/></svg></div>
      <div class="app-i"><svg class="ic30"><use href="#i-wa"/></svg><span class="badge b3">3</span></div>
      <div class="app-i sel"><svg class="ic30 c-red"><use href="#t-opera"/></svg></div>
      <div class="app-i"><svg class="ic30 c-pur"><use href="#t-opera"/></svg></div>
      <div class="app-i run"><svg class="ic30"><use href="#t-n"/></svg></div>
      <div class="app-i"><svg class="ic30"><use href="#t-chrome"/></svg></div>
      <div class="app-i"><svg class="ic30 c-pink"><use href="#t-opera"/></svg></div>
      <div class="app-i"><svg class="ic30"><use href="#t-flix"/></svg></div>
      <div class="app-i run"><svg class="ic30"><use href="#t-spot"/></svg></div>
      <div class="app-i run"><svg class="ic30"><use href="#t-word"/></svg></div>
    </div>
    <div class="tray">
      <svg class="caret"><use href="#t-caret"/></svg>
      <svg class="ic22 cloud"><use href="#t-cloud"/></svg>
      <div class="lang"><span>ESP</span><span>LAA</span></div>
      <svg class="ic20 wifi"><use href="#t-wifi"/></svg>
      <svg class="ic20 vol"><use href="#t-vol"/></svg>
      <svg class="ic22 bat"><use href="#t-bat"/></svg>
      <div class="clock"><span>3:20 p. m.</span><span>17/04/2023</span></div>
      <span class="badge b4">4</span>
    </div>
  </footer>
</div>
</body>
</html>
```

FILE: styles.css
```css
* { box-sizing: border-box; }
html, body { margin: 0; padding: 0; height: 100%; overflow: hidden; background: #0a0a0a; }
body { font-family: "Open Sans", "Noto Sans", sans-serif; color: #ddd; }
.sprite { display: block; width: 0; height: 0; overflow: hidden; }
svg { display: block; flex: none; }
.ic12 { width: 12px; height: 12px; }
.ic14 { width: 14px; height: 14px; }
.ic16 { width: 16px; height: 16px; }
.ic17 { width: 17px; height: 17px; }
.ic18 { width: 18px; height: 18px; }
.ic20 { width: 20px; height: 20px; }
.ic22 { width: 22px; height: 22px; }
.ic24 { width: 24px; height: 24px; }
.ic26 { width: 26px; height: 26px; }
.ic30 { width: 30px; height: 30px; }

.app { display: grid; grid-template-columns: 50px 1fr; grid-template-rows: 1020px 60px; width: 1920px; height: 1080px; }

/* sidebar */
.sidebar { display: flex; flex-direction: column; background: #0a0a0a; }
.side-top { height: 907px; overflow: hidden; }
.side-logo { height: 50px; display: flex; align-items: center; justify-content: center; }
.side-item { height: 56px; display: flex; align-items: center; justify-content: center; }
.side-item.first { margin-top: 34px; height: 57px; }
.side-item.nudge { height: 60px; }
.side-sep { width: 15px; height: 1px; background: #c4c4c4; margin: 10px auto 9px; }
.side-sep.s1 { margin: 6px auto 10px; }
.side-sep.s3 { margin-bottom: 11px; }
.side-bottom { flex: 1; border-top: 1px solid #444; }
.side-slot { height: 72px; display: flex; align-items: center; justify-content: center; }
.side-more { display: flex; justify-content: center; gap: 4px; margin-top: 14px; }
.side-more i { width: 4px; height: 4px; border-radius: 50%; background: #c4c4c4; }

/* tab strip */
.content { display: flex; flex-direction: column; min-width: 0; }
.tabstrip { height: 38px; display: flex; align-items: flex-start; padding-left: 14px; background: #0a0a0a; }
.tab-game { width: 42px; height: 38px; display: flex; align-items: center; }
.tab { width: 66.35px; height: 38px; display: flex; align-items: center; gap: 4px; flex: none; }
.tab-t { width: 27px; margin-top: -2px; overflow: hidden; white-space: nowrap; font-size: 15px; color: #b4b4b4; letter-spacing: -.2px;
  -webkit-mask-image: linear-gradient(90deg, #000 60%, transparent); mask-image: linear-gradient(90deg, #000 60%, transparent); }
.tab.active { position: relative; z-index: 2; width: 80px; height: 39px; margin-left: -6.35px; padding-left: 7px; background: #141414;
  border: 1px solid #c8c8c8; border-bottom: 0; border-radius: 3px 3px 0 0; }
.tab.active .tab-t { width: 17px; color: #fff; }
.tab-x { margin-left: 3px; }
.tab.after { margin-left: 11px; }
.tab-plus { width: 24px; height: 38px; font-size: 26px; font-weight: 300; line-height: 34px; color: #ccc; text-align: center; }
.winctl { margin-left: auto; display: flex; }
.win { width: 50px; height: 38px; display: flex; align-items: center; justify-content: center; }
.min { width: 16px; height: 1px; background: #ccc; margin-top: 15px; }
.rest { width: 14px; height: 14px; border: 1px solid #ccc; margin: 3px 3px 0 0; box-shadow: 3px -3px 0 -1px #0a0a0a, 3px -3px 0 0 #ccc; }

/* browser chrome */
.window { flex: 1; min-height: 0; display: flex; flex-direction: column; border-left: 1px solid #bdbdbd; background: #141414; }
.chrome { height: 145px; background: #141414; flex: none; border-top: 1px solid; border-image: linear-gradient(90deg, #c8c8c8 82%, #141414 90%) 1; }
.addr { height: 45px; display: flex; align-items: center; padding: 2px 0 0 17px; }
.nav { width: 12px; height: 18px; }
.fwd { margin-left: 30px; opacity: .35; }
.reload { margin-left: 28px; }
.vdots { display: block; width: 2px; height: 14px; background: repeating-linear-gradient(180deg, #3c3c3c 0 2px, transparent 2px 5px); }
.addr > .vdots { margin-left: 16px; }
.lock { width: 12px; height: 16px; margin-left: 23px; }
.url { margin-left: 25px; font-size: 15.5px; color: #a8a8a8; white-space: nowrap; letter-spacing: -.12px; }
.url b { font-weight: 400; color: #ececec; }
.addr-tools { margin-left: auto; display: flex; padding-right: 2px; height: 45px; margin-top: -2px; }
.addr-tools > div { display: flex; align-items: center; justify-content: center; flex: none; }
.s8 { width: 8px; } .s32 { width: 32px; } .s34 { width: 34px; } .s40 { width: 40px; } .s42 { width: 42px; } .s44 { width: 44px; } .s46 { width: 46px; }
.has-dot { position: relative; }
.dot { position: absolute; left: 27px; top: 4px; width: 10px; height: 10px; border-radius: 50%; background: #c4c4c4; }

.marks { height: 40px; display: flex; align-items: center; padding: 0 0 2px 21px; }
.mark-i { display: flex; align-items: center; margin-right: 15px; font-size: 14.3px; color: #c4c4c4; white-space: nowrap; }
.m-acer { gap: 11px; margin-right: 17px; }
.m-imp { gap: 11px; }
.m-app { gap: 10px; }

.find { height: 59px; display: flex; align-items: center; padding-left: 22px; }
.find-box { width: 309px; height: 27px; border: 1px solid #c8c8c8; display: flex; align-items: center; gap: 14px; padding-left: 7px; font-size: 15px; color: #f0f0f0; }
.find-prev { margin-left: 28px; }
.find-next { margin-left: 23px; }
.find-count { margin-left: 22px; font-size: 14.3px; color: #f4f4f4; }
.find-x { margin-left: auto; margin-right: 26px; }

/* pdf toolbar */
.pdfbar { position: relative; z-index: 3; height: 71px; flex: none; display: grid; grid-template-columns: 745px auto 1fr; align-items: center; background: #323639; box-shadow: 0 2px 5px rgba(0,0,0,.45); font-family: Roboto, sans-serif; color: #f1f1f1; }
.pdf-left { display: flex; align-items: center; padding-left: 31px; }
.p-menu { width: 22px; height: 16px; }
.pdf-title { margin-left: 32px; padding-top: 1px; font-size: 17.5px; font-weight: 500; }
.pdf-center { display: flex; align-items: center; }
.pdf-input { height: 22px; background: #191b1c; display: flex; align-items: center; justify-content: center; font-size: 15.5px; color: #f1f1f1; }
.pg { width: 38px; }
.zm { width: 55px; margin-left: 20px; }
.pdf-total { margin-left: 6px; font-size: 15.5px; width: 38px; white-space: nowrap; }
.pdf-sep { width: 1px; height: 18px; background: #5f6368; margin-left: 20px; }
.pdf-sep.first { margin-left: 25px; }
.pdf-minus { width: 14px; height: 2px; background: #f1f1f1; margin-left: 21px; }
.pdf-plus { width: 15px; height: 15px; margin-left: 19px; background: linear-gradient(#f1f1f1,#f1f1f1) center/100% 2px no-repeat, linear-gradient(#f1f1f1,#f1f1f1) center/2px 100% no-repeat; }
.p-fit { width: 22px; height: 20px; margin-left: 27px; }
.p-rot { width: 22px; height: 24px; margin-left: 23px; }
.pdf-right { display: flex; align-items: center; justify-content: flex-end; padding-right: 31px; gap: 26px; }
.p-dots { width: 6px; height: 20px; margin: 0 9px; }

/* viewer */
.viewer { flex: 1; min-height: 0; display: flex; background: #525659; }
.pdf-area { flex: 1; min-width: 0; display: flex; justify-content: center; overflow: hidden; }
.page { position: relative; width: 691px; height: 766px; flex: none; background: #f0edda; overflow: hidden; }
.page-head { height: 94px; padding-top: 3px; }
.cond { display: inline-block; transform-origin: 0 50%; white-space: nowrap; }
.cond-c { display: inline-block; flex: none; transform: scaleX(.608); transform-origin: 50% 50%; white-space: nowrap; }
.h-title { margin: 0 0 0 114px; width: 462px; height: 30px; font: italic 700 26px/30px "Liberation Sans", sans-serif; color: #1c1a16; letter-spacing: -.3px; }
.h-title .cond { transform: scaleX(.703); }
.hit { background: rgba(60,130,170,.5); }
.h-rule { height: 1px; margin-top: 13px; width: 394px; background: #d8d4a8; position: relative; }
.h-rule i { position: absolute; left: 394px; top: -3px; width: 7px; height: 7px; background: #807800; }
.h-sub { margin: 6px 0 0 295px; width: 92px; font: italic 700 17px/22px "Liberation Sans", sans-serif; color: #1c1a16; letter-spacing: -.2px; }
.h-sub .cond { transform: scaleX(.76); }
.margin-tab { position: absolute; left: 3px; top: 27px; width: 38px; height: 79px; background: #e9e6cc; border-top: 1px solid #999; border-bottom: 5px solid #d9d6b0; }
.margin-tab::after { content: ""; position: absolute; left: 38px; top: -1px; width: 22px; height: 1px; background: #999; }
.margin-txt { position: absolute; left: 26px; bottom: 3px; writing-mode: vertical-rl; transform: rotate(180deg); font: 6px/9px "Liberation Sans", sans-serif; font-variant: small-caps; letter-spacing: -.2px; color: #9a9a8c; white-space: nowrap; }
.page-no { position: absolute; left: 41px; top: 26px; height: 20px; padding: 4px 0 0 1px; border-left: 1px solid #888; font: 700 11px/14px "Liberation Sans", sans-serif; letter-spacing: -.5px; color: #222; }

.olive { margin-left: 66px; height: 658px; padding-left: 12px; background: #c5bc7e; }
.intro { margin: 0; height: 39px; padding-top: 7px; font: italic 16.4px/22px "Liberation Serif", serif; color: #2c2a22; letter-spacing: -.15px; }
.cols { display: grid; grid-template-columns: 264px 264px; grid-template-rows: 43px 551px; column-gap: 7px; row-gap: 5px; }
.col-h { display: flex; align-items: center; justify-content: center; overflow: hidden; padding-top: 3px; background: #cec996; border: 1px solid #6e6a48; box-shadow: 2px 2px 3px rgba(0,0,0,.35); font: 13.5px/16px "Liberation Sans", sans-serif; color: #66664a; letter-spacing: -.25px; }
.col-h.alt { background: #d2cd9c; }
.col-b { display: flex; flex-direction: column; align-items: flex-start; overflow: hidden; background: #dcd8ac; border: 1px solid #6e6a48; box-shadow: 2px 2px 3px rgba(0,0,0,.35); padding: 9.5px 0 0 24px; }
.col-b.alt { background: #e9e6cb; padding-left: 23px; }
.list { flex: none; width: 277px; margin: 0; padding: 0; list-style: none; transform: scaleX(.82); transform-origin: 0 0; font: 11px/13.35px "Liberation Serif", serif; color: #625e52; letter-spacing: .03px; }
.col-b.alt .list { width: 278px; }
.list li { position: relative; }
.list li::before { content: ""; position: absolute; left: -16px; top: 5px; width: 4.2px; height: 3.500px; border-radius: 50%; background: #5e5e50; }
.list span { display: block; text-align: justify; text-align-last: justify; }
.list span.e { text-align-last: left; }
.wm { margin-top: auto; white-space: nowrap; font-family: "Liberation Serif", serif; font-style: italic; color: #bcbcb6; }
.wm-l { margin-left: -19px; font-size: 45px; line-height: 35px; }
.wm-r { margin-left: -2px; font-size: 74px; line-height: 46px; font-weight: 400; word-spacing: -7px; -webkit-text-stroke: .8px #bcbcb6; }
.wm-r sup { font-size: 44px; font-weight: 400; line-height: 0; vertical-align: 26px; -webkit-text-stroke: 0; }

.scroll { position: relative; width: 18px; flex: none; background: #f1f1f1; }
.thumb { position: absolute; left: 0; right: 0; top: 324px; height: 36px; background: #cdcdcd; }
.hit-mark { position: absolute; left: 0; right: 0; height: 3px; background: #f2c200; border-top: 1px solid #b46a00; border-bottom: 1px solid #d08a00; }
.m1 { top: 101px; height: 6px; } .m2 { top: 199px; } .m3 { top: 214px; height: 4px; } .m4 { top: 468px; } .m5 { top: 501px; } .m6 { top: 751px; }
.sc-arrow { position: absolute; left: 5px; width: 8px; height: 8px; border-left: 2px solid #666; border-top: 2px solid #666; }
.up { top: 7px; transform: rotate(45deg); }
.down { bottom: 7px; transform: rotate(225deg); }

/* taskbar */
.taskbar { grid-column: 1 / 3; display: flex; align-items: center; background: #1f1f1f; border-top: 1px solid #333; font-family: "Open Sans", sans-serif; color: #f0f0f0; }
.weather { width: 311px; display: flex; align-items: center; padding-left: 24px; gap: 8px; flex: none; }
.wx { width: 32px; height: 32px; }
.wx-t, .lang, .clock { display: flex; flex-direction: column; font-size: 14.3px; line-height: 20px; margin-top: -1px; }
.tb-win { width: 56px; display: flex; justify-content: center; flex: none; }
.tb-search { width: 273px; height: 40px; margin-left: 5px; border-radius: 20px; background: #383838; display: flex; align-items: center; padding: 0 8px 0 13px; gap: 12px; font-size: 15.8px; color: #cccccc; flex: none; }
.bing { width: 24px; height: 28px; margin-left: auto; }
.tb-apps { margin-left: 5px; display: flex; flex: none; }
.app-i { position: relative; width: 54.9px; height: 50px; display: flex; align-items: center; justify-content: center; }
.app-i.run::after { content: ""; position: absolute; left: 50%; bottom: 0; width: 6px; height: 3px; margin-left: -3px; border-radius: 2px; background: #888; }
.app-i.sel { background: #2c2c2c; border-radius: 4px; width: 49px; margin: 0 3px; }
.app-i.sel::after { content: ""; position: absolute; left: 14px; bottom: 2px; width: 20px; height: 3px; border-radius: 2px; background: #d8a8e0; }
.c-red { stroke: #e0193e; }
.c-pur { stroke: #8a3ff0; }
.c-pink { stroke: #e8117f; }
.badge { display: flex; align-items: center; justify-content: center; border-radius: 50%; background: #d8a8e0; color: #2a2030; font-size: 12px; }
.b3 { position: absolute; left: 32px; top: -1px; width: 19px; height: 19px; }
.b4 { width: 20px; height: 20px; margin-left: 9px; }
.tray { flex: 1; display: flex; align-items: center; }
.caret { width: 16px; height: 10px; margin-left: 26px; }
.cloud { margin-left: 22px; }
.lang { margin-left: 17px; width: 38px; align-items: center; }
.wifi { margin-left: 19px; }
.vol { margin-left: 9px; }
.bat { margin-left: 11px; }
.clock { font-size: 14.6px; width: 96px; align-items: flex-end; }
```
